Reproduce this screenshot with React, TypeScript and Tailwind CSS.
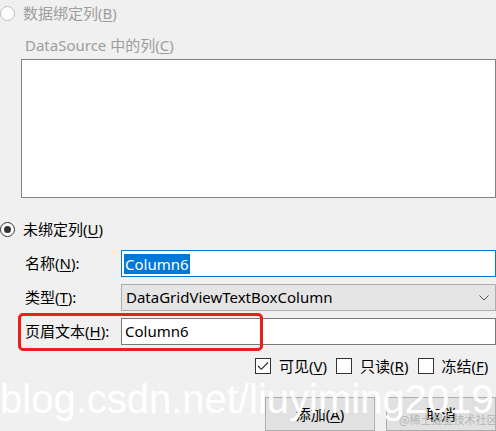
import React from "react";

const F = { fontFamily: '"Segoe UI", "Noto Sans", "Noto Sans CJK SC", sans-serif' };

function U({ c }: { c: string }) {
  return <span className="underline underline-offset-2">{c}</span>;
}

export default function App() {
  return (
    <div
      className="relative w-[496px] h-[431px] overflow-hidden bg-[#f0f0f0] text-[15px] text-[#000] flex flex-col"
      style={F}
    >
      {/* radio 1 */}
      <div className="mt-[3px] h-[20px] flex items-center">
        <div className="w-[15px] h-[15px] rounded-full border border-[#bcbcbc] bg-white shrink-0" />
        <span className="ml-[8px] text-[#9d9d9d] leading-[20px]">
          数据绑定列(<U c="B" />)
        </span>
      </div>
      <div className="mt-[12px] h-[20px] ml-[25px] text-[#9d9d9d] leading-[20px]">
        DataSource 中的列(<U c="C" />)
      </div>
      <div className="mt-[4px] ml-[21px] w-[475px] h-[140px] bg-white border border-[#838383]" />

      {/* radio 2 */}
      <div className="mt-[21px] h-[20px] flex items-center">
        <div className="w-[15px] h-[15px] rounded-full border border-[#333] bg-white shrink-0 flex items-center justify-center">
          <div className="w-[7px] h-[7px] rounded-full bg-[#333]" />
        </div>
        <span className="ml-[8px] leading-[20px]">
          未绑定列(<U c="U" />)
        </span>
      </div>

      {/* name */}
      <div className="mt-[11px] h-[27px] flex items-center">
        <div className="w-[121px] pl-[25px]">
          名称(<U c="N" />):
        </div>
        <div className="w-[375px] h-[27px] bg-white border border-[#0078d7] flex items-center pl-[2px]">
          <span className="bg-[#0078d7] text-white px-[1px] h-[20px] leading-[20px]">Column6</span>
        </div>
      </div>

      {/* type */}
      <div className="mt-[7px] h-[27px] flex items-center">
        <div className="w-[121px] pl-[25px]">
          类型(<U c="T" />):
        </div>
        <div className="w-[375px] h-[27px] bg-[#e5e5e5] border border-[#adadad] flex items-center pl-[4px] pr-[5px]">
          <span className="flex-1">DataGridViewTextBoxColumn</span>
          <svg width="10" height="6" viewBox="0 0 10 6" className="mr-[1px]">
            <path d="M0.5 0.5 L5 5 L9.5 0.5" fill="none" stroke="#555" strokeWidth="1" />
          </svg>
        </div>
      </div>

      {/* header text */}
      <div className="mt-[7px] h-[27px] flex items-center">
        <div className="w-[121px] pl-[25px]">
          页眉文本(<U c="H" />):
        </div>
        <div className="w-[375px] h-[27px] bg-white border border-[#7a7a7a] flex items-center pl-[3px]">
          Column6
        </div>
      </div>

      {/* checkboxes */}
      <div className="mt-[13px] h-[16px] flex items-center pl-[255px]">
        <div className="w-[16px] h-[16px] border border-[#333] bg-white flex items-center justify-center shrink-0">
          <svg width="12" height="10" viewBox="0 0 12 10">
            <path d="M1 5 L4.3 8.3 L11 1.5" fill="none" stroke="#222" strokeWidth="1.1" />
          </svg>
        </div>
        <span className="ml-[8px]">
          可见(<U c="V" />)
        </span>
        <div className="ml-[9px] w-[16px] h-[16px] border border-[#333] bg-white shrink-0" />
        <span className="ml-[8px]">
          只读(<U c="R" />)
        </span>
        <div className="ml-[10px] w-[16px] h-[16px] border border-[#333] bg-white shrink-0" />
        <span className="ml-[7px]">
          冻结(<U c="F" />)
        </span>
      </div>

      {/* buttons */}
      <div className="mt-[23px] flex pl-[265px] gap-[11px]">
        <div className="w-[110px] h-[34px] bg-[#e1e1e1] border border-[#adadad] flex items-center justify-center">
          添加(<U c="A" />)
        </div>
        <div className="w-[110px] h-[34px] bg-[#e1e1e1] border border-[#adadad] flex items-center justify-center">
          取消
        </div>
      </div>

      {/* annotation */}
      <div className="absolute left-[18px] top-[313px] w-[245px] h-[38px] border-[3px] border-[#e8201c] rounded-[5px]" />

      {/* watermarks */}
      <div
        className="absolute left-[0px] top-[379px] text-[40px] leading-[40px] text-white whitespace-nowrap"
        style={{ fontFamily: '"Liberation Sans", Arial, sans-serif' }}
      >
        blog.csdn.net/liuyiming2019
      </div>
      <div
        className="absolute left-[399px] top-[412px] text-[11px] leading-[14px] text-[#b4b4b4] whitespace-nowrap"
        style={{ fontFamily: '"Noto Sans CJK SC", sans-serif' }}
      >
        @稀土掘金技术社区
      </div>
    </div>
  );
}
